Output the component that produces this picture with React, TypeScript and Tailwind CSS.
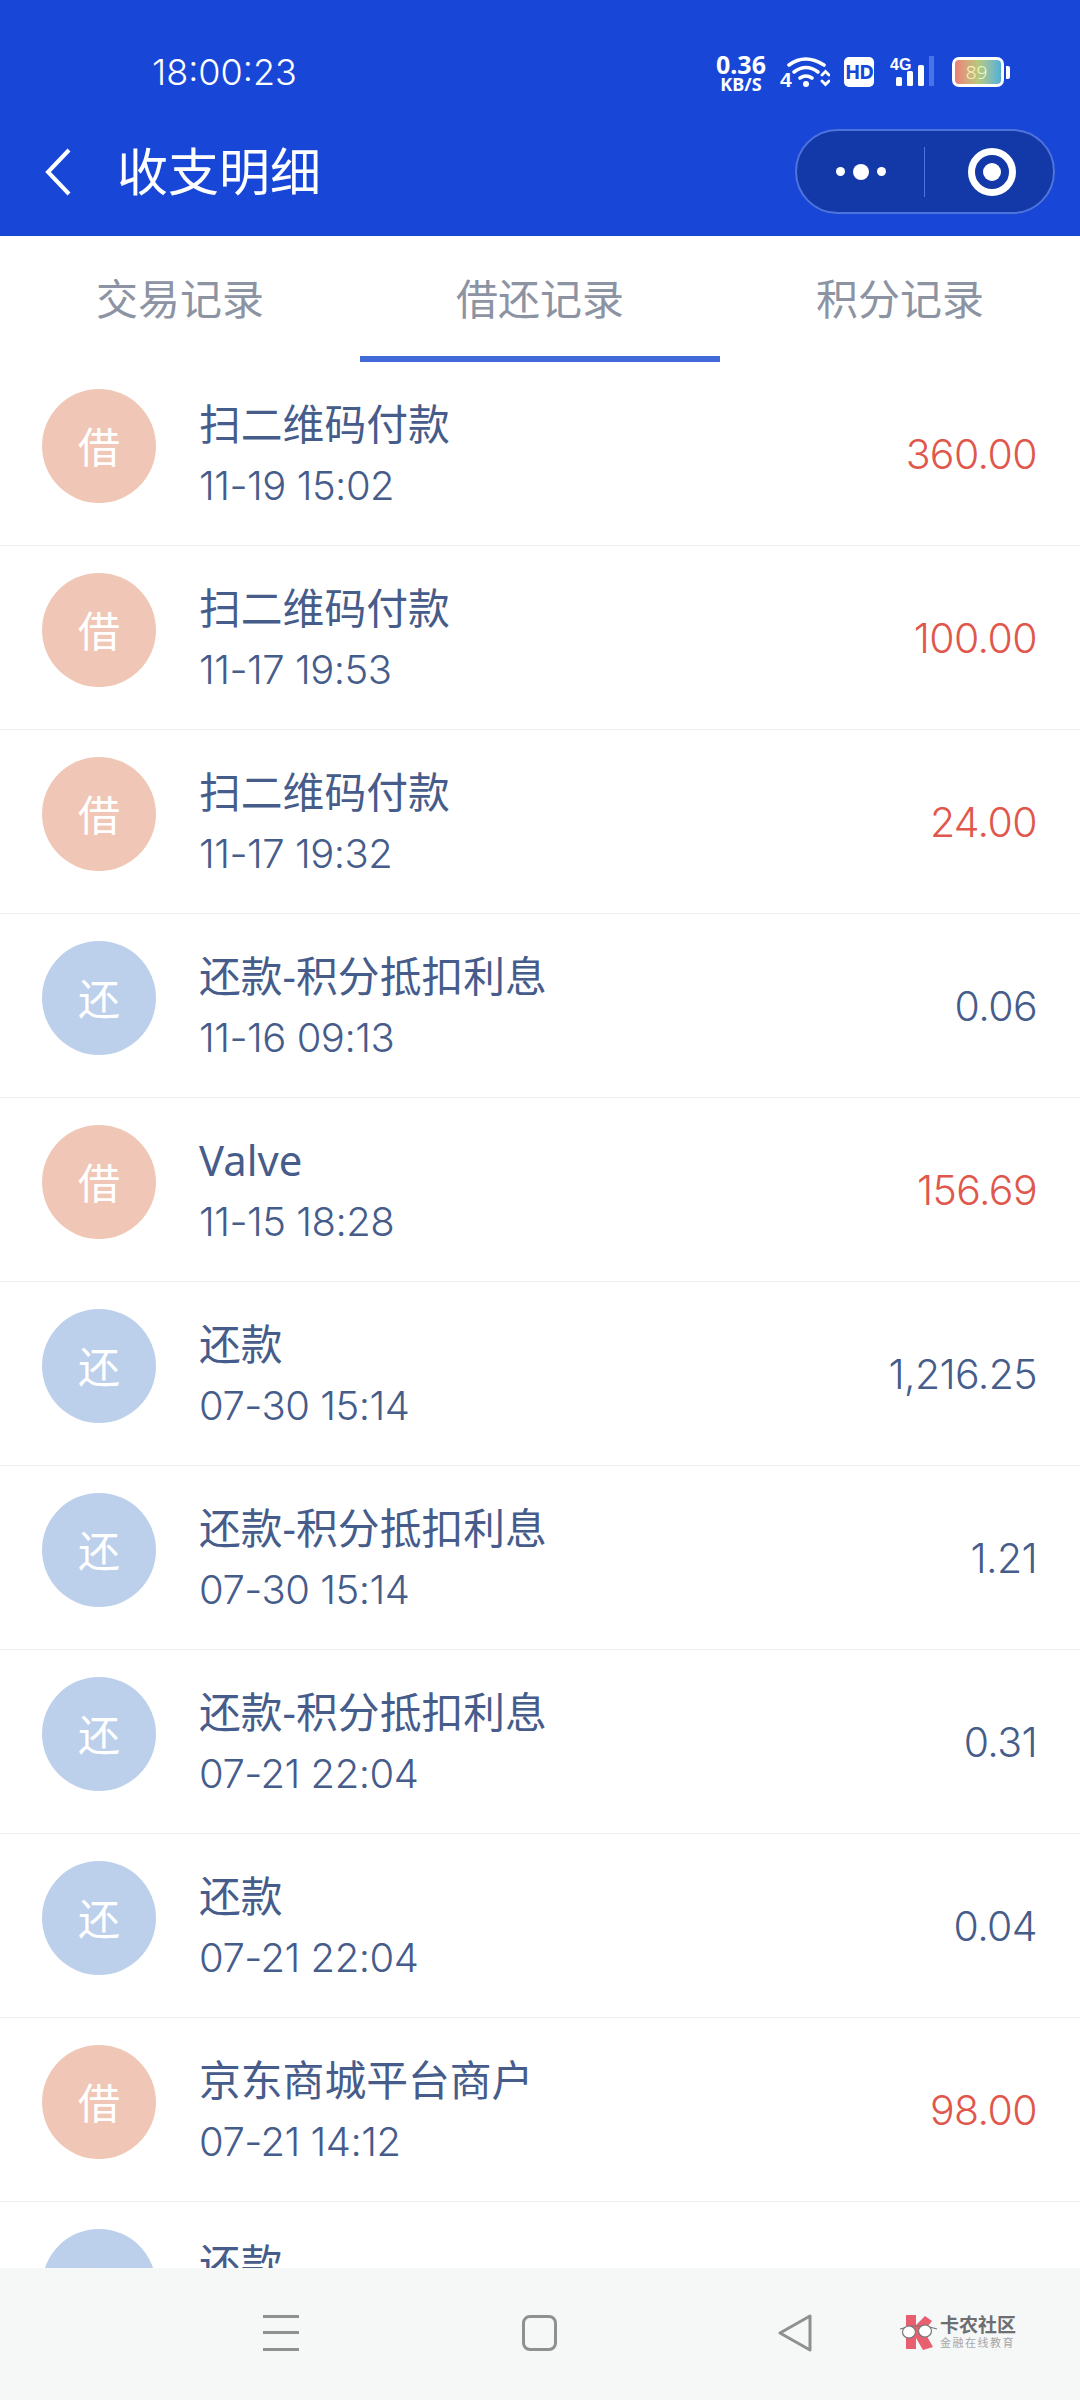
import React, { useState } from 'react';

type Record = {
  kind: '借' | '还';
  title: string;
  time: string;
  amount: string;
};

const records: Record[] = [
  { kind: '借', title: '扫二维码付款', time: '11-19 15:02', amount: '360.00' },
  { kind: '借', title: '扫二维码付款', time: '11-17 19:53', amount: '100.00' },
  { kind: '借', title: '扫二维码付款', time: '11-17 19:32', amount: '24.00' },
  { kind: '还', title: '还款-积分抵扣利息', time: '11-16 09:13', amount: '0.06' },
  { kind: '借', title: 'Valve', time: '11-15 18:28', amount: '156.69' },
  { kind: '还', title: '还款', time: '07-30 15:14', amount: '1,216.25' },
  { kind: '还', title: '还款-积分抵扣利息', time: '07-30 15:14', amount: '1.21' },
  { kind: '还', title: '还款-积分抵扣利息', time: '07-21 22:04', amount: '0.31' },
  { kind: '还', title: '还款', time: '07-21 22:04', amount: '0.04' },
  { kind: '借', title: '京东商城平台商户', time: '07-21 14:12', amount: '98.00' },
  { kind: '还', title: '还款', time: '07-21 14:10', amount: '98.00' },
];

const tabs = ['交易记录', '借还记录', '积分记录'];

function StatusIcons() {
  return (
    <div className="flex items-center">
      <div className="flex w-[50px] flex-col items-center font-bold leading-none text-white">
        <span className="text-[25px] leading-[23px]">0.36</span>
        <span className="text-[18px] leading-[16px]">KB/S</span>
      </div>
      {/* wifi */}
      <svg width="50" height="32" viewBox="0 0 50 32" className="ml-[14px]" fill="none" stroke="white" strokeWidth="3.6" strokeLinecap="round">
        <path d="M9 9 Q25 -3 44 9" />
        <path d="M14 16 Q26 7 38 16" />
        <path d="M20 22 Q26 18 32 22" />
        <circle cx="26" cy="28" r="3" fill="white" stroke="none" />
        <text x="0" y="31" fontSize="21" fontWeight="700" fill="white" stroke="none" fontFamily="'Liberation Sans', sans-serif">4</text>
        <path d="M42 19 L45.5 15.5 L49 19 M42 25 L45.5 28.5 L49 25" strokeWidth="2.8" />
      </svg>
      <div className="ml-[14px] flex h-[30px] w-[30px] items-center justify-center rounded-[5px] bg-white text-[20px] font-bold tracking-[-1px] text-[#1847d8]">
        HD
      </div>
      {/* 4G signal */}
      <svg width="46" height="32" viewBox="0 0 46 32" className="ml-[16px]">
        <text x="0" y="14" fontSize="16" fontWeight="700" fill="white" fontFamily="'Liberation Sans', sans-serif">4G</text>
        <rect x="6" y="21" width="6" height="9" rx="1.5" fill="white" />
        <rect x="17" y="15" width="6" height="15" rx="1.5" fill="white" />
        <rect x="28" y="9" width="6" height="21" rx="1.5" fill="white" />
        <rect x="39" y="0" width="5" height="30" fill="#4a73e8" />
      </svg>
      {/* battery */}
      <div className="ml-[16px] flex items-center">
        <div className="flex h-[30px] w-[52px] items-center justify-center rounded-[7px] border-[3px] border-white bg-gradient-to-r from-[#ec7d78] via-[#b6c87e] to-[#4fb0d8] pr-[3px] text-[19px] font-light leading-none text-[#f4f7c0]">
          89
        </div>
        <div className="ml-[2px] h-[13px] w-[4px] rounded-r-[2px] bg-white" />
      </div>
    </div>
  );
}

function CapsuleMenu() {
  return (
    <div className="flex h-[85px] w-[260px] items-center rounded-full border-2 border-[#4e73dc] bg-[#1339a8]">
      <div className="flex flex-1 items-center justify-center gap-[8px]">
        <span className="h-[9px] w-[9px] rounded-full bg-white" />
        <span className="h-[16px] w-[16px] rounded-full bg-white" />
        <span className="h-[9px] w-[9px] rounded-full bg-white" />
      </div>
      <div className="h-[50px] w-px bg-[#4e73dc]" />
      <div className="flex w-[128px] items-center justify-center pl-[5px]">
        <div className="flex h-[48px] w-[48px] items-center justify-center rounded-full border-[7px] border-white">
          <span className="h-[18px] w-[18px] rounded-full bg-white" />
        </div>
      </div>
    </div>
  );
}

function RecordRow({ item }: { item: Record }) {
  const isBorrow = item.kind === '借';
  return (
    <div className="flex h-[184px] shrink-0 items-center border-b border-[#f0f1f3] pl-[42px] pr-[43px]">
      <div
        className={`mb-[15px] flex h-[114px] w-[114px] shrink-0 items-center justify-center rounded-full text-[42px] text-white ${
          isBorrow ? 'bg-[#f0c7b6]' : 'bg-[#bccfeb]'
        }`}
      >
        {item.kind}
      </div>
      <div className="ml-[43px] flex-1 text-[#465c8a]">
        <div className="text-[41.8px] leading-[64px]">{item.title}</div>
        <div className="font-['Inter'] text-[40px] font-light leading-[60px] tracking-[-0.5px]">{item.time}</div>
      </div>
      <div className={`mt-[2px] font-['Inter'] text-[41px] font-light tracking-[-0.6px] ${isBorrow ? 'text-[#e0574c]' : 'text-[#465c8a]'}`}>
        {item.amount}
      </div>
    </div>
  );
}

function CardNongLogo() {
  return (
    <div className="flex items-center">
      <svg width="40" height="36" viewBox="0 0 40 36">
        <path d="M7 0 H17 V10 L26 1 L33 6 L25 16 L34 32 L24 35 L17 23 V34 H7 Z" fill="#e8606f" />
        <path d="M1 14 L13 11 L27 11 L38 14" fill="none" stroke="#777" strokeWidth="1.2" />
        <ellipse cx="10" cy="17" rx="6.5" ry="6" fill="white" stroke="#777" strokeWidth="1.2" />
        <ellipse cx="26" cy="16" rx="6.5" ry="6" fill="white" stroke="#777" strokeWidth="1.2" />
      </svg>
      <div className="ml-[1px] flex flex-col">
        <span className="text-[19px] font-bold leading-[21px] text-[#6d6f73]">卡农社区</span>
        <span className="text-[11px] leading-[14px] tracking-[1.5px] text-[#a5a7aa]">金融在线教育</span>
      </div>
    </div>
  );
}

export default function App() {
  const [activeTab, setActiveTab] = useState(1);

  return (
    <div
      className="flex h-[2400px] w-[1080px] flex-col overflow-hidden bg-white"
      style={{ fontFamily: "'Noto Sans', 'Noto Sans CJK SC', sans-serif" }}
    >
      {/* Header */}
      <div className="h-[236px] shrink-0 bg-[#1847d8] text-white">
        <div className="flex h-[129px] items-center justify-between pl-[152px] pr-[70px] pt-[15px]">
          <span className="font-['Inter'] text-[36px] font-light">18:00:23</span>
          <StatusIcons />
        </div>
        <div className="flex items-center pl-[45px] pr-[25px]">
          <svg width="26" height="48" viewBox="0 0 26 48" fill="none" stroke="white" strokeWidth="4">
            <path d="M24 2 L3 24 L24 46" />
          </svg>
          <h1 className="ml-[46px] flex-1 text-[51px]">收支明细</h1>
          <CapsuleMenu />
        </div>
      </div>

      {/* Tabs */}
      <div className="flex h-[126px] shrink-0">
        {tabs.map((tab, i) => (
          <button
            key={tab}
            onClick={() => setActiveTab(i)}
            className={`flex-1 border-b-[6px] pt-[4px] text-[42px] text-[#8c93a3] ${
              activeTab === i ? 'border-[#4169d8]' : 'border-transparent'
            }`}
          >
            {tab}
          </button>
        ))}
      </div>

      {/* List */}
      <div className="flex min-h-0 flex-1 flex-col overflow-hidden">
        {records.map((item, i) => (
          <RecordRow key={i} item={item} />
        ))}
      </div>

      {/* Android nav bar */}
      <div className="flex h-[132px] shrink-0 items-center bg-[#f6f7f7] pb-[3px]">
        <div className="ml-[263px] flex h-[36px] w-[36px] flex-col justify-between">
          <span className="h-[3px] bg-[#909090]" />
          <span className="h-[3px] bg-[#909090]" />
          <span className="h-[3px] bg-[#909090]" />
        </div>
        <div className="ml-[223px] h-[36px] w-[35px] rounded-[8px] border-[3px] border-[#909090]" />
        <svg width="36" height="38" viewBox="0 0 36 38" className="ml-[220px]" fill="none" stroke="#909090" strokeWidth="3" strokeLinejoin="round">
          <path d="M33 2 V36 L3 19 Z" />
        </svg>
        <div className="ml-[86px]">
          <CardNongLogo />
        </div>
      </div>
    </div>
  );
}
